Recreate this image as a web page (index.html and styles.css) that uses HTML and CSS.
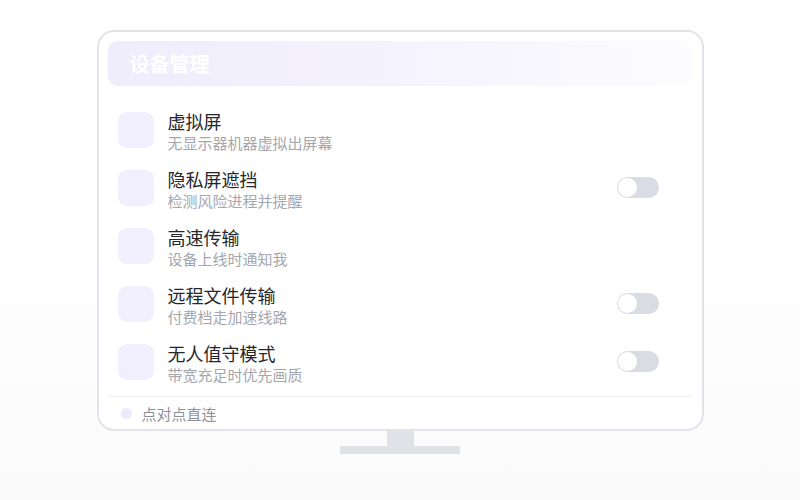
FILE: index.html
```html
<!DOCTYPE html>
<html lang="zh-CN">
<head>
    <meta charset="UTF-8">
    <meta name="viewport" content="width=device-width, initial-scale=1.0">
    <title>设备管理</title>
    <link rel="stylesheet" href="styles.css">
</head>
<body>
    <div class="stage">
        <div class="monitor">
            <div class="header">
                <h1>设备管理</h1>
            </div>

            <div class="list">
                <div class="row">
                    <div class="icon"></div>
                    <div class="text">
                        <div class="title">虚拟屏</div>
                        <div class="sub">无显示器机器虚拟出屏幕</div>
                    </div>
                </div>
                <div class="row">
                    <div class="icon"></div>
                    <div class="text">
                        <div class="title">隐私屏遮挡</div>
                        <div class="sub">检测风险进程并提醒</div>
                    </div>
                    <span class="toggle"></span>
                </div>
                <div class="row">
                    <div class="icon"></div>
                    <div class="text">
                        <div class="title">高速传输</div>
                        <div class="sub">设备上线时通知我</div>
                    </div>
                </div>
                <div class="row">
                    <div class="icon"></div>
                    <div class="text">
                        <div class="title">远程文件传输</div>
                        <div class="sub">付费档走加速线路</div>
                    </div>
                    <span class="toggle"></span>
                </div>
                <div class="row">
                    <div class="icon"></div>
                    <div class="text">
                        <div class="title">无人值守模式</div>
                        <div class="sub">带宽充足时优先画质</div>
                    </div>
                    <span class="toggle"></span>
                </div>
            </div>

            <div class="footer">
                <span class="dot"></span>
                <span>点对点直连</span>
            </div>
        </div>

        <!-- stand -->
        <div class="neck"></div>
        <div class="base"></div>
    </div>
</body>
</html>
```

FILE: styles.css
```css
html, body {
    height: 100%;
}

body {
    margin: 0;
    font-family: "Liberation Sans", "Noto Sans CJK SC", sans-serif;
    background: linear-gradient(to bottom, #ffffff 0%, #ffffff 45%, #fafafb 100%);
}

.stage {
    display: flex;
    flex-direction: column;
    align-items: center;
    padding-top: 30px;
}

.monitor {
    width: 607px;
    height: 401px;
    box-sizing: border-box;
    border: 2px solid #e2e4ea;
    border-radius: 17px;
    background-color: #fff;
    padding: 9px 10px 0 9px;
    display: flex;
    flex-direction: column;
}

.header {
    height: 45px;
    border-radius: 10px;
    background: linear-gradient(to right, #efecfc 0%, #f5f3fd 50%, #fcfcfe 100%);
    display: flex;
    align-items: center;
    padding-left: 22px;
}

.header h1 {
    margin: 0;
    font-size: 20px;
    font-weight: 700;
    color: #fff;
    line-height: 1;
    padding-top: 2px;
}

.list {
    margin-top: 15px;
}

.row {
    height: 58px;
    display: flex;
    align-items: center;
    padding: 0 33px 0 10px;
}

.icon {
    width: 36px;
    height: 36px;
    border-radius: 9px;
    background-color: #f1eefd;
    flex-shrink: 0;
}

.text {
    flex: 1;
    margin-left: 14px;
    padding-top: 6px;
}

.title {
    font-size: 18px;
    line-height: 22px;
    color: #25272d;
}

.sub {
    font-size: 15px;
    line-height: 20px;
    color: #a4a7ae;
}

.toggle {
    position: relative;
    width: 42px;
    height: 21px;
    border-radius: 11px;
    background-color: #d9dce2;
    margin-top: -1px;
}

.toggle::after {
    content: "";
    position: absolute;
    left: 1px;
    top: 1px;
    width: 19px;
    height: 19px;
    border-radius: 50%;
    background-color: #fff;
}

.footer {
    margin-top: 5px;
    border-top: 1px solid #eceef2;
    height: 32px;
    display: flex;
    align-items: center;
    padding-left: 13px;
    font-size: 15px;
    color: #8e9198;
}

.dot {
    width: 11px;
    height: 11px;
    border-radius: 50%;
    background-color: #ece9fb;
    margin-right: 10px;
}

.neck {
    width: 27px;
    height: 15px;
    background-color: #dfe2e7;
}

.base {
    width: 120px;
    height: 8px;
    background-color: #dfe2e7;
}
```
